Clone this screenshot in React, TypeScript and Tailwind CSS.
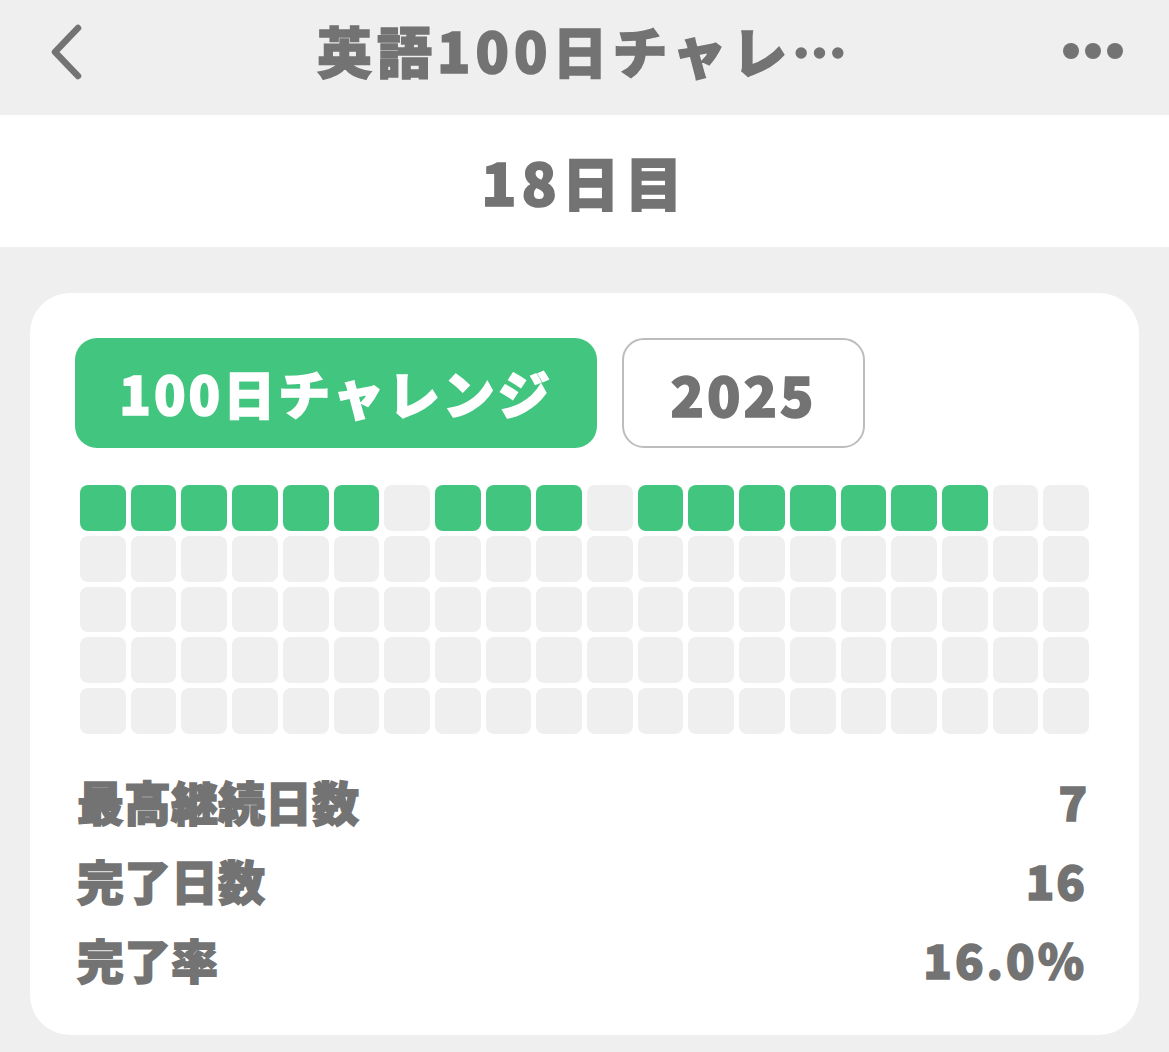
import React from "react";

const green = new Set([0, 1, 2, 3, 4, 5, 7, 8, 9, 11, 12, 13, 14, 15, 16, 17]);

export default function App() {
  const cells = Array.from({ length: 100 }, (_, i) => i);
  return (
    <div
      className="w-[1169px] h-[1052px] bg-[#efefef] text-[#737373] overflow-hidden"
      style={{ fontFamily: '"Noto Sans CJK JP", "Noto Sans", sans-serif' }}
    >
      {/* Nav bar */}
      <div className="h-[115px] flex items-center justify-between px-[46px] relative">
        <svg width="40" height="56" viewBox="0 0 40 56" className="mt-[-12px]">
          <path d="M32 4 L9 28 L32 52" fill="none" stroke="#737373" strokeWidth="6.5" strokeLinecap="round" strokeLinejoin="round" />
        </svg>
        <div className="absolute left-0 right-0 top-[14px] text-center text-[55px] font-black leading-[70px] tracking-[5px] pointer-events-none [-webkit-text-stroke:1.5px_#737373]">
          英語100日チャレ…
        </div>
        <svg width="60" height="20" viewBox="0 0 60 20" className="mt-[-14px]">
          <circle cx="8" cy="10" r="8" fill="#737373" />
          <circle cx="30" cy="10" r="8" fill="#737373" />
          <circle cx="52" cy="10" r="8" fill="#737373" />
        </svg>
      </div>
      {/* Day band */}
      <div className="h-[132px] bg-white flex items-center justify-center">
        <div className="text-[58px] font-black tracking-[5px] leading-none [-webkit-text-stroke:1.5px_#737373]">18日目</div>
      </div>
      {/* Card */}
      <div className="px-[30px] pt-[46px]">
        <div className="bg-white rounded-[40px] h-[742px] pt-[45px] px-[45px]">
          <div className="flex gap-[25px]">
            <div className="h-[110px] w-[522px] bg-[#42c57f] rounded-[22px] flex items-center justify-center text-white text-[52px] font-black tracking-[3px] [-webkit-text-stroke:1.5px_#ffffff]">
              100日チャレンジ
            </div>
            <div className="h-[110px] w-[243px] border-2 border-[#bdbdbd] rounded-[22px] flex items-center justify-center text-[55px] font-black tracking-[3px] [-webkit-text-stroke:1.5px_#737373]">
              2025
            </div>
          </div>
          <div className="mt-[37px] mx-[5px] grid grid-cols-[repeat(20,minmax(0,1fr))] gap-[5px]">
            {cells.map((i) => (
              <div
                key={i}
                className={`h-[45.8px] rounded-[8px] ${green.has(i) ? "bg-[#42c57f]" : "bg-[#efefef]"}`}
              />
            ))}
          </div>
          <div className="mt-[28px] pl-[2px] pr-[7px] flex flex-col text-[47px] font-black [-webkit-text-stroke:1.5px_#737373]">
            <div className="flex justify-between items-center h-[79px]">
              <span>最高継続日数</span>
              <span>7</span>
            </div>
            <div className="flex justify-between items-center h-[79px]">
              <span>完了日数</span>
              <span className="tracking-[2px]">16</span>
            </div>
            <div className="flex justify-between items-center h-[79px]">
              <span>完了率</span>
              <span className="tracking-[3px]">16.0%</span>
            </div>
          </div>
        </div>
      </div>
    </div>
  );
}
